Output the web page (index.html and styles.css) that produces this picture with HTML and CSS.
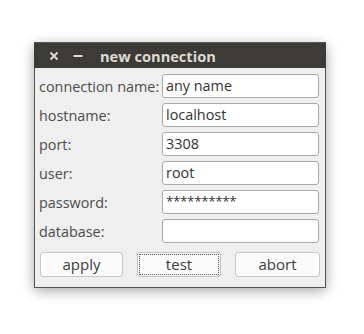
FILE: index.html
```html
<!DOCTYPE html>
<html lang="en">

<head>
    <meta charset="UTF-8">
    <meta name="viewport" content="width=device-width, initial-scale=1.0">
    <title>new connection</title>
    <link rel="stylesheet" href="styles.css">
</head>

<body>
    <div class="window">
        <div class="window__title">
            <div class="window__controls">
                <svg class="window__btn" width="10" height="10" viewBox="0 0 10 10">
                    <path d="M1.5 1.5 L8.5 8.5 M8.5 1.5 L1.5 8.5" stroke="#dfdbd2" stroke-width="2" />
                </svg>
                <svg class="window__btn" width="10" height="10" viewBox="0 0 10 10">
                    <path d="M0.5 5 L9.5 5" stroke="#dfdbd2" stroke-width="2" />
                </svg>
            </div>
            <span class="window__name">new connection</span>
        </div>

        <div class="window__body">
            <div class="form">
                <label class="form__label">connection name:</label>
                <div class="form__field">any name</div>

                <label class="form__label">hostname:</label>
                <div class="form__field">localhost</div>

                <label class="form__label">port:</label>
                <div class="form__field">3308</div>

                <label class="form__label">user:</label>
                <div class="form__field">root</div>

                <label class="form__label">password:</label>
                <div class="form__field form__field--secret">**********</div>

                <label class="form__label">database:</label>
                <div class="form__field"></div>
            </div>

            <div class="buttons">
                <div class="button">apply</div>
                <div class="button button--focus"><span class="button__focus">test</span></div>
                <div class="button">abort</div>
            </div>
        </div>
    </div>
</body>

</html>
```

FILE: styles.css
```css
* {
    margin: 0;
    padding: 0;
    box-sizing: border-box;
}

body {
    width: 100%;
    height: 100vh;
    overflow: hidden;
    background-color: #fff;
    font-family: "Open Sans", "Noto Sans", sans-serif;
    font-size: 14.4px;
}

/* window */
.window {
    width: 292px;
    height: 246px;
    margin: 42px 0 0 34px;
    border: 1px solid #55534f;
    border-top: 0;
    background-color: #efefef;
    box-shadow: 0 3px 12px rgba(0, 0, 0, 0.35);
}

.window__title {
    display: flex;
    align-items: center;
    height: 26px;
    margin: 0 -1px;
    background-color: #3c3b37;
    border-top: 1px solid #5a5954;
    color: #dfdbd2;
}

.window__controls {
    display: flex;
    align-items: center;
    gap: 14px;
    padding-left: 15px;
    width: 66px;
}

.window__name {
    font-weight: bold;
    font-size: 14.6px;
}

.window__body {
    padding: 6px 6px 0 4px;
}

/* form */
.form {
    display: grid;
    grid-template-columns: 123px 157px;
    grid-auto-rows: 24px;
    row-gap: 5px;
    align-items: center;
}

.form__label {
    color: #4c4c4c;
    padding-top: 1px;
    white-space: nowrap;
}

.form__field {
    height: 24px;
    line-height: 22px;
    padding-left: 3px;
    border: 1px solid #a9a9a9;
    border-radius: 3px;
    background-color: #fff;
    color: #333;
}

.form__field--secret {
    font-size: 13.5px;
    line-height: 21px;
    letter-spacing: -0.4px;
}

/* buttons */
.buttons {
    display: grid;
    grid-template-columns: 83px 84px 85px;
    column-gap: 14px;
    margin: 9px 0 0 1px;
}

.button {
    height: 25px;
    border: 1px solid #c6c6c6;
    border-radius: 3px;
    background-color: #fbfbfb;
    color: #3c3c3c;
    text-align: center;
    line-height: 23px;
    font-size: 15px;
}

.button--focus {
    border-color: #c0c0c0;
    padding: 1px;
}

.button__focus {
    display: block;
    height: 100%;
    border: 1px dotted #555;
    line-height: 19px;
}
```
